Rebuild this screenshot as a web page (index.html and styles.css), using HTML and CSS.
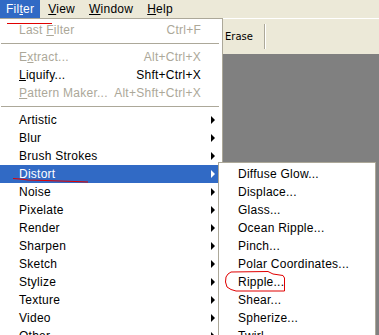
FILE: index.html
```html
<!DOCTYPE html>
<html>
<head>
<meta charset="utf-8">
<link rel="stylesheet" href="styles.css">
</head>
<body>
<div class="menubar">
  <span class="mb-item active">Fil<u>t</u>er</span>
  <span class="mb-item"><u>V</u>iew</span>
  <span class="mb-item"><u>W</u>indow</span>
  <span class="mb-item"><u>H</u>elp</span>
</div>
<div class="toolbar">
  <span class="tool-label">Erase</span>
  <span class="tool-sep"></span>
</div>
<div class="workspace"></div>

<div class="menu main-menu">
  <div class="item disabled"><span>Last <u>F</u>ilter</span><span class="key">Ctrl+F</span><span></span></div>
  <div class="sep"></div>
  <div class="item disabled"><span>E<u>x</u>tract...</span><span class="key">Alt+Ctrl+X</span><span></span></div>
  <div class="item"><span><u>L</u>iquify...</span><span class="key">Shft+Ctrl+X</span><span></span></div>
  <div class="item disabled"><span><u>P</u>attern Maker...</span><span class="key">Alt+Shft+Ctrl+X</span><span></span></div>
  <div class="sep"></div>
  <div class="item"><span>Artistic</span><span></span><span class="arrow"></span></div>
  <div class="item"><span>Blur</span><span></span><span class="arrow"></span></div>
  <div class="item"><span>Brush Strokes</span><span></span><span class="arrow"></span></div>
  <div class="item hl"><span>Distort</span><span></span><span class="arrow"></span></div>
  <div class="item"><span>Noise</span><span></span><span class="arrow"></span></div>
  <div class="item"><span>Pixelate</span><span></span><span class="arrow"></span></div>
  <div class="item"><span>Render</span><span></span><span class="arrow"></span></div>
  <div class="item"><span>Sharpen</span><span></span><span class="arrow"></span></div>
  <div class="item"><span>Sketch</span><span></span><span class="arrow"></span></div>
  <div class="item"><span>Stylize</span><span></span><span class="arrow"></span></div>
  <div class="item"><span>Texture</span><span></span><span class="arrow"></span></div>
  <div class="item"><span>Video</span><span></span><span class="arrow"></span></div>
  <div class="item"><span>Other</span><span></span><span class="arrow"></span></div>
</div>

<div class="menu sub-menu">
  <div class="sitem">Diffuse Glow...</div>
  <div class="sitem">Displace...</div>
  <div class="sitem">Glass...</div>
  <div class="sitem">Ocean Ripple...</div>
  <div class="sitem">Pinch...</div>
  <div class="sitem">Polar Coordinates...</div>
  <div class="sitem">Ripple...</div>
  <div class="sitem">Shear...</div>
  <div class="sitem">Spherize...</div>
  <div class="sitem">Twirl...</div>
</div>

<svg class="marks" width="379" height="335" viewBox="0 0 379 335">
  <path d="M7 23.5 L52 23.5" stroke="#e00000" stroke-width="1.2" fill="none"/>
  <path d="M13 178.5 L20 179 L28 180 L45 180.5 L60 181 L75 181.5 L88 182" stroke="#e00000" stroke-width="1.1" fill="none"/>
  <path d="M231 272 L268 271.5 L273 274 L283 275.5 L284.5 278 L284.5 291 L236 291 L231 289.5 L227 287 L225.5 282 L226 277 L228 274 Z" stroke="#e00000" stroke-width="1" fill="none"/>
</svg>
</body>
</html>
```
FILE: styles.css
```css
* { box-sizing: border-box; }
html, body {
  margin: 0;
  padding: 0;
  width: 379px;
  height: 335px;
  overflow: hidden;
  background: #808080;
  font-family: "Liberation Sans", Arial, sans-serif;
  font-size: 12px;
  letter-spacing: 0.25px;
  position: relative;
}
u { text-decoration: underline; text-underline-offset: 1px; }

.menubar {
  height: 18px;
  background: #ECE9D8;
  display: flex;
  gap: 2px;
  align-items: stretch;
}
.mb-item {
  padding: 0 6px;
  line-height: 18px;
  color: #000;
}
.mb-item.active {
  background: #316AC5;
  color: #fff;
}

.toolbar {
  height: 36px;
  background: #ECE9D8;
  border-top: 1px solid #fff;
  display: flex;
  align-items: center;
  padding-left: 225px;
  gap: 11px;
}
.tool-label {
  font-family: "DejaVu Sans", sans-serif;
  font-size: 10px;
  letter-spacing: 0;
  color: #000;
}
.tool-sep {
  width: 2px;
  height: 25px;
  border-left: 1px solid #ACA899;
  border-right: 1px solid #fff;
}
.workspace {
  height: 281px;
  background: #808080;
}

.menu {
  position: absolute;
  background: #fff;
  border: 1px solid #ACA899;
  padding: 2px;
}
.main-menu {
  left: -3px;
  top: 18px;
  width: 226px;
}
.item {
  height: 18px;
  display: grid;
  grid-template-columns: 1fr auto 19px;
  align-items: center;
  padding-left: 19px;
  color: #000;
  white-space: nowrap;
}
.item.disabled { color: #ACA899; }
.item.hl { background: #316AC5; color: #fff; }
.key { text-align: right; }
.arrow {
  justify-self: start;
  margin-left: 10px;
  width: 0;
  height: 0;
  border-top: 4px solid transparent;
  border-bottom: 4px solid transparent;
  border-left: 4px solid #000;
}
.item.hl .arrow { border-left-color: #fff; }
.sep {
  height: 9px;
  margin: 0 1px;
  display: flex;
  align-items: center;
}
.sep::before {
  content: "";
  flex: 1;
  height: 1px;
  background: #ACA899;
}

.sub-menu {
  left: 218px;
  top: 162px;
  width: 158px;
}
.sitem {
  height: 18px;
  line-height: 18px;
  padding-left: 17px;
  color: #000;
  white-space: nowrap;
}

.marks {
  position: absolute;
  left: 0;
  top: 0;
  pointer-events: none;
}
```
